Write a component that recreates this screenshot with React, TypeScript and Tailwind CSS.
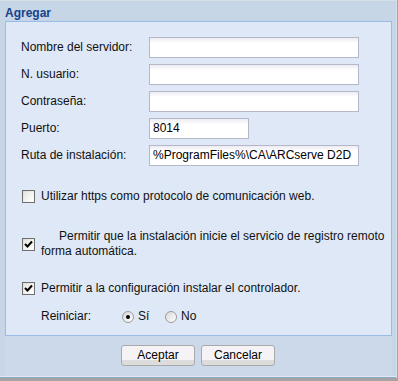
import React from "react";

function TextField({ value = "", width = "w-[210px]" }: { value?: string; width?: string }) {
  return (
    <div
      className={`${width} h-[21px] border border-[#b5b8c8] bg-[linear-gradient(to_bottom,#ebebf2,#ffffff_5px)] px-[3px] flex items-center text-black`}
    >
      {value}
    </div>
  );
}

function Checkbox({ checked }: { checked?: boolean }) {
  return (
    <div className="w-[13px] h-[13px] shrink-0 border border-[#6f6f6f] bg-[linear-gradient(135deg,#dcdcd6,#ffffff)] p-[1px]">
      <div className="w-full h-full bg-[linear-gradient(135deg,#e6e6e0,#ffffff)] flex items-center justify-center">
        {checked && (
          <svg width="9" height="9" viewBox="0 0 9 9">
            <path d="M1 4 L3.5 6.5 L8 1.5" stroke="#000" strokeWidth="2" fill="none" />
          </svg>
        )}
      </div>
    </div>
  );
}

function Radio({ checked }: { checked?: boolean }) {
  return (
    <div className="w-[12px] h-[12px] shrink-0 rounded-full border border-[#9a9a9a] bg-[linear-gradient(135deg,#d8d8d8,#ffffff)] flex items-center justify-center">
      {checked && <div className="w-[4px] h-[4px] rounded-full bg-black" />}
    </div>
  );
}

function Button({ children }: { children: React.ReactNode }) {
  return (
    <div className="w-[74px] h-[21px] rounded-[3px] border border-[#a9a9a9] bg-[linear-gradient(to_bottom,#f6f3f6_0,#f6f3f6_72%,#dcdcdc_72%,#dcdcdc_100%)] flex items-center justify-center text-black">
      {children}
    </div>
  );
}

const fields = [
  { label: "Nombre del servidor:", value: "" },
  { label: "N. usuario:", value: "" },
  { label: "Contraseña:", value: "" },
  { label: "Puerto:", value: "8014", width: "w-[100px]" },
  { label: "Ruta de instalación:", value: "%ProgramFiles%\\CA\\ARCserve D2D" },
];

export default function App() {
  return (
    <div
      className="w-[398px] h-[381px] bg-[#a4a4a4] text-[12px] leading-[15px] text-[#111]"
      style={{ fontFamily: '"Liberation Sans", Arial, sans-serif' }}
    >
      <div className="w-[397px] h-[378px] border-t border-r border-[#d6dee8] bg-[#c6d6e6] flex flex-col">
        {/* title */}
        <div className="h-[20px] pl-[5px] pt-[5px] font-bold text-[#15428b]">Agregar</div>

        <div className="mx-[5px] w-[387px] flex-1 flex flex-col bg-[#ccd9ea]">
          {/* form panel */}
          <div className="h-[315px] border border-[#99bbe8] bg-[#dfe8f6] pl-[15px] pt-[15px]">
            <div className="flex flex-col gap-[6px]">
              {fields.map((f, i) => (
                <div key={i} className="flex items-center">
                  <div className="w-[128px]">{f.label}</div>
                  <TextField value={f.value} width={f.width} />
                </div>
              ))}
            </div>

            <div className="pl-[1px]">
              <div className="mt-[23px] flex items-center gap-[6px]">
                <Checkbox />
                <span>Utilizar https como protocolo de comunicación web.</span>
              </div>

              <div className="mt-[25px] flex items-center gap-[6px]">
                <Checkbox checked />
                <div className="whitespace-nowrap">
                  <div className="pl-[18px]">Permitir que la instalación inicie el servicio de registro remoto</div>
                  <div>forma automática.</div>
                </div>
              </div>

              <div className="mt-[22px] flex items-center gap-[6px]">
                <Checkbox checked />
                <span>Permitir a la configuración instalar el controlador.</span>
              </div>

              <div className="mt-[13px] pl-[19px] flex items-center">
                <div className="w-[81px]">Reiniciar:</div>
                <Radio checked />
                <span className="ml-[4px] w-[27px]">Sí</span>
                <Radio />
                <span className="ml-[4px]">No</span>
              </div>
            </div>
          </div>

          {/* buttons */}
          <div className="mt-[9px] flex justify-center gap-[6px] pr-[1px]">
            <Button>Aceptar</Button>
            <Button>Cancelar</Button>
          </div>
        </div>

        <div className="h-[2px] border-t border-[#e0e8f2] bg-[#90a8c8]" />
      </div>
    </div>
  );
}
